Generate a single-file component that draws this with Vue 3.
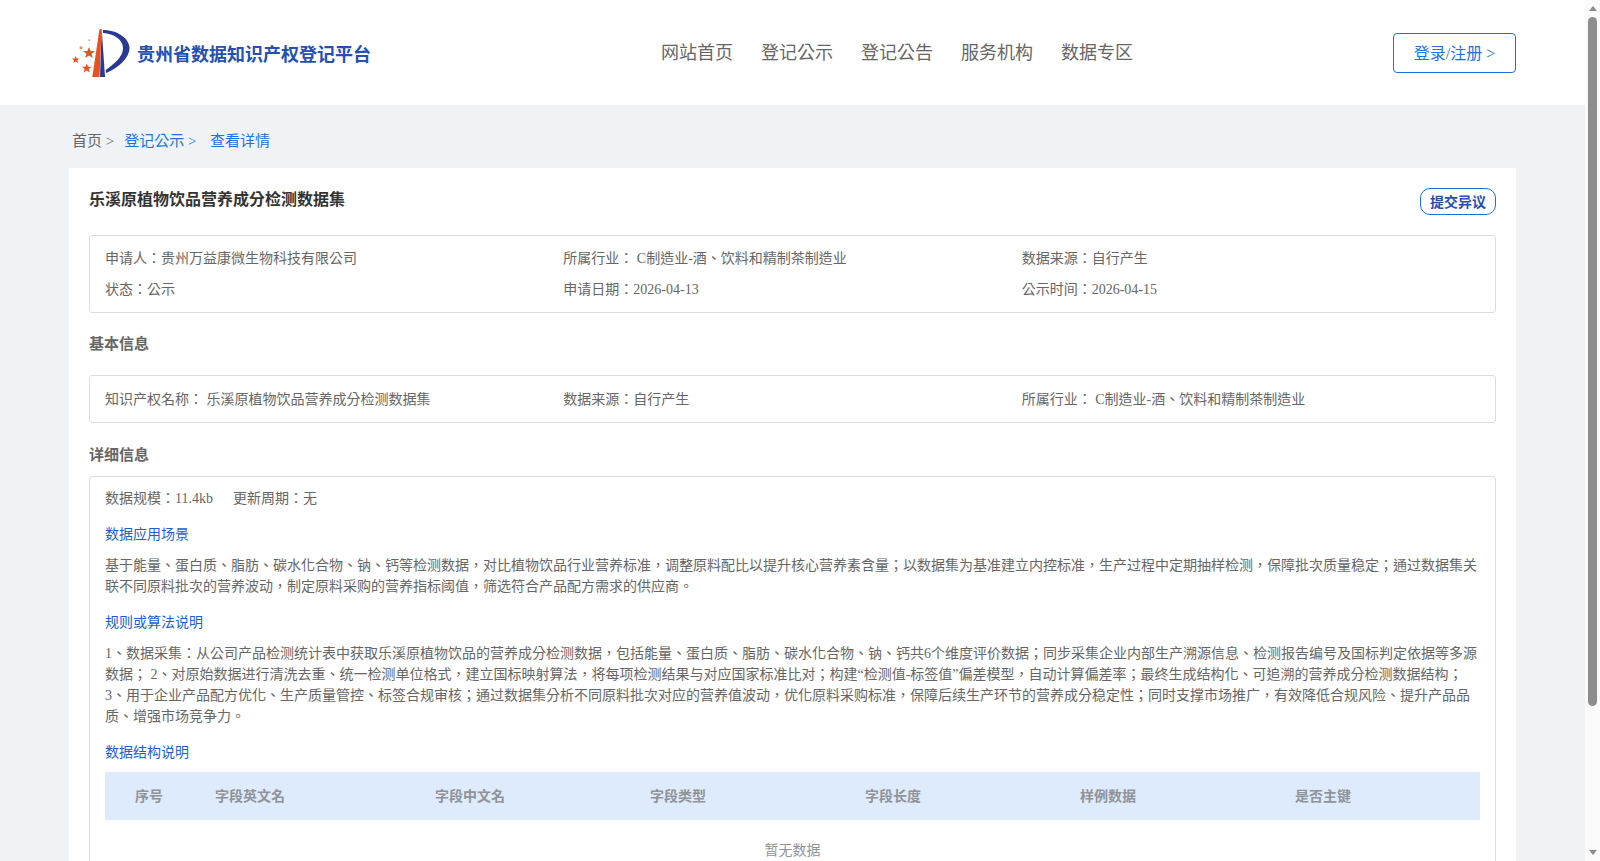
<template>
  <div class="page">
    <header class="top">
      <div class="brand">
        <svg class="logo" width="60" height="52" viewBox="0 0 60 52">
          <path d="M29.500 2 L31.700 2 L29.500 50 L22.300 50 Z" fill="#e8501f"/>
          <path d="M31.700 2 L30 50 L35 50 Z" fill="#2a3a92"/>
          <path d="M33 3 C48 3 59.500 12 59.500 21 C59.500 32 46 42 36 46 L35.700 43 C44 37 53 30 53 21 C53 13 44 6.500 33 6 Z" fill="#2a3a92"/>
          <polygon points="19,20 20.600,24 25,24 21.500,26.700 22.800,31 19,28.400 15.200,31 16.500,26.700 13,24 17.400,24" fill="#e8501f"/>
          <polygon points="5.700,29 6.700,31.500 9.500,31.500 7.300,33.200 8.100,36 5.700,34.400 3.300,36 4.100,33.200 1.900,31.500 4.700,31.500" fill="#e8501f"/>
          <polygon points="16.700,36.500 18,39.800 21.600,39.800 18.700,42 19.800,45.500 16.700,43.400 13.600,45.500 14.700,42 11.800,39.800 15.400,39.800" fill="#e8501f"/>
          <circle cx="11" cy="20.700" r="1.500" fill="#ee8a63"/>
          <circle cx="19.300" cy="13.300" r="1" fill="#f0a083"/>
        </svg>
        <span class="brand-name">贵州省数据知识产权登记平台</span>
      </div>
      <nav class="nav">
        <a v-for="item in navItems" :key="item">{{ item }}</a>
      </nav>
      <button class="login">登录/注册 &gt;</button>
    </header>

    <div class="crumbs">
      <span>首页 &gt;</span>
      <a>登记公示 &gt;</a>
      <a>查看详情</a>
    </div>

    <main class="card">
      <div class="title-row">
        <h1>乐溪原植物饮品营养成分检测数据集</h1>
        <button class="objection">提交异议</button>
      </div>

      <div class="box summary">
        <span v-for="item in summary" :key="item">{{ item }}</span>
      </div>

      <h2>基本信息</h2>
      <div class="box summary single">
        <span v-for="item in basic" :key="item">{{ item }}</span>
      </div>

      <h2 class="tight">详细信息</h2>
      <div class="box detail">
        <div class="scale">
          <span>数据规模：11.4kb</span>
          <span>更新周期：无</span>
        </div>
        <h3>数据应用场景</h3>
        <p>基于能量、蛋白质、脂肪、碳水化合物、钠、钙等检测数据，对比植物饮品行业营养标准，调整原料配比以提升核心营养素含量；以数据集为基准建立内控标准，生产过程中定期抽样检测，保障批次质量稳定；通过数据集关联不同原料批次的营养波动，制定原料采购的营养指标阈值，筛选符合产品配方需求的供应商。</p>
        <h3>规则或算法说明</h3>
        <p>1、数据采集：从公司产品检测统计表中获取乐溪原植物饮品的营养成分检测数据，包括能量、蛋白质、脂肪、碳水化合物、钠、钙共6个维度评价数据；同步采集企业内部生产溯源信息、检测报告编号及国标判定依据等多源数据； 2、对原始数据进行清洗去重、统一检测单位格式，建立国标映射算法，将每项检测结果与对应国家标准比对；构建“检测值-标签值”偏差模型，自动计算偏差率；最终生成结构化、可追溯的营养成分检测数据结构；<br>3、用于企业产品配方优化、生产质量管控、标签合规审核；通过数据集分析不同原料批次对应的营养值波动，优化原料采购标准，保障后续生产环节的营养成分稳定性；同时支撑市场推广，有效降低合规风险、提升产品品质、增强市场竞争力。</p>
        <h3>数据结构说明</h3>
        <div class="table-head">
          <span v-for="col in columns" :key="col">{{ col }}</span>
        </div>
        <div class="empty">暂无数据</div>
      </div>
    </main>

    <!-- classic window scrollbar, headless mode hides the real one -->
    <div class="scrollbar">
      <i class="arrow up"></i>
      <div class="thumb"></div>
      <i class="arrow down"></i>
    </div>
  </div>
</template>

<script setup>
const navItems = ['网站首页', '登记公示', '登记公告', '服务机构', '数据专区']

const summary = [
  '申请人：贵州万益康微生物科技有限公司',
  '所属行业： C制造业-酒、饮料和精制茶制造业',
  '数据来源：自行产生',
  '状态：公示',
  '申请日期：2026-04-13',
  '公示时间：2026-04-15'
]

const basic = [
  '知识产权名称： 乐溪原植物饮品营养成分检测数据集',
  '数据来源：自行产生',
  '所属行业： C制造业-酒、饮料和精制茶制造业'
]

const columns = ['序号', '字段英文名', '字段中文名', '字段类型', '字段长度', '样例数据', '是否主键']
</script>

<style>
html, body {
  margin: 0;
  background: #eff3f6;
}
</style>

<style scoped>
.page {
  font-family: "Liberation Serif", "Noto Sans CJK TC", serif;
  color: #666;
  font-size: 14px;
  line-height: 21px;
  width: 1585px;
  min-height: 1037px;
  background: #eff3f6;
}

.top {
  height: 105px;
  background: #fff;
  display: flex;
  align-items: center;
  padding: 0 69px 0 70px;
  box-sizing: border-box;
}

.brand {
  display: flex;
  align-items: center;
  width: 590px;
  flex-shrink: 0;
}

.logo {
  flex-shrink: 0;
  margin-right: 7px;
}

.brand-name {
  font-size: 18px;
  font-weight: bold;
  color: #2450b2;
  margin-top: 6px;
}

.nav {
  display: flex;
  gap: 28px;
  font-size: 18px;
  color: #666;
  margin-top: 2px;
  margin-left: 1px;
}

.login {
  width: 123px;
  height: 40px;
  margin-left: auto;
  background: #fff;
  border: 1px solid #1a6fe0;
  border-radius: 4px;
  color: #1a73e8;
  font-family: inherit;
  font-size: 16px;
  padding: 0 0 2px;
}

.crumbs {
  display: flex;
  gap: 10px;
  padding: 9px 72px 0;
  height: 63px;
  box-sizing: border-box;
  align-items: center;
  font-size: 15px;
}

.crumbs a {
  color: #1a73e8;
}

.crumbs a:last-child {
  margin-left: 3.500px;
}

.card {
  margin: 0 69px;
  background: #fff;
  padding: 20px 20px 40px;
}

.title-row {
  display: flex;
  justify-content: space-between;
  align-items: center;
  height: 27px;
  margin-bottom: 20px;
}

h1 {
  margin: -5px 0 0;
  font-size: 16px;
  font-weight: bold;
  color: #333;
}

.objection {
  width: 76px;
  height: 27px;
  border: 1px solid #1a6fe0;
  border-radius: 10px;
  background: #fff;
  color: #2450b2;
  font-family: inherit;
  font-size: 14px;
  font-weight: bold;
  padding: 0 0 1px;
}

.box {
  border: 1px solid #ddd;
  border-radius: 3px;
  padding: 12px 15px;
}

.summary {
  display: grid;
  grid-template-columns: repeat(3, 1fr);
  row-gap: 10px;
}

.summary.single {
  padding-top: 13px;
}

h2 {
  margin: 20px 0;
  font-size: 15px;
  font-weight: bold;
  color: #666;
  line-height: 22px;
}

h2.tight {
  margin-top: 21px;
  margin-bottom: 10px;
}

.detail {
  padding-top: 11px;
}

.scale {
  display: flex;
  gap: 20px;
  margin-bottom: 15px;
}

h3 {
  margin: 0 0 10px;
  font-size: 14px;
  font-weight: normal;
  color: #1a5fd0;
}

p {
  margin: 0 0 15px;
}

.table-head {
  display: grid;
  grid-template-columns: 80px 220px repeat(5, 1fr);
  height: 48px;
  align-items: center;
  background: #deebfc;
  font-weight: bold;
  color: #909399;
  margin-top: -1px;
}

.table-head span {
  padding-left: 30px;
}

.empty {
  text-align: center;
  color: #909399;
  padding: 20px 0 100px;
}

.scrollbar {
  position: fixed;
  top: 0;
  right: 0;
  bottom: 0;
  width: 15px;
  background: #fafafa;
  display: flex;
  flex-direction: column;
  align-items: center;
}

.thumb {
  width: 9px;
  height: 689px;
  margin-top: 6px;
  background: #8d8d8d;
  border-radius: 5px;
}

.arrow {
  display: block;
  width: 0;
  height: 0;
  border-left: 4px solid transparent;
  border-right: 4px solid transparent;
}

.arrow.up {
  margin-top: 6px;
  border-bottom: 5px solid #8a8a8a;
}

.arrow.down {
  margin-top: auto;
  margin-bottom: 6px;
  border-top: 5px solid #8a8a8a;
}
</style>
